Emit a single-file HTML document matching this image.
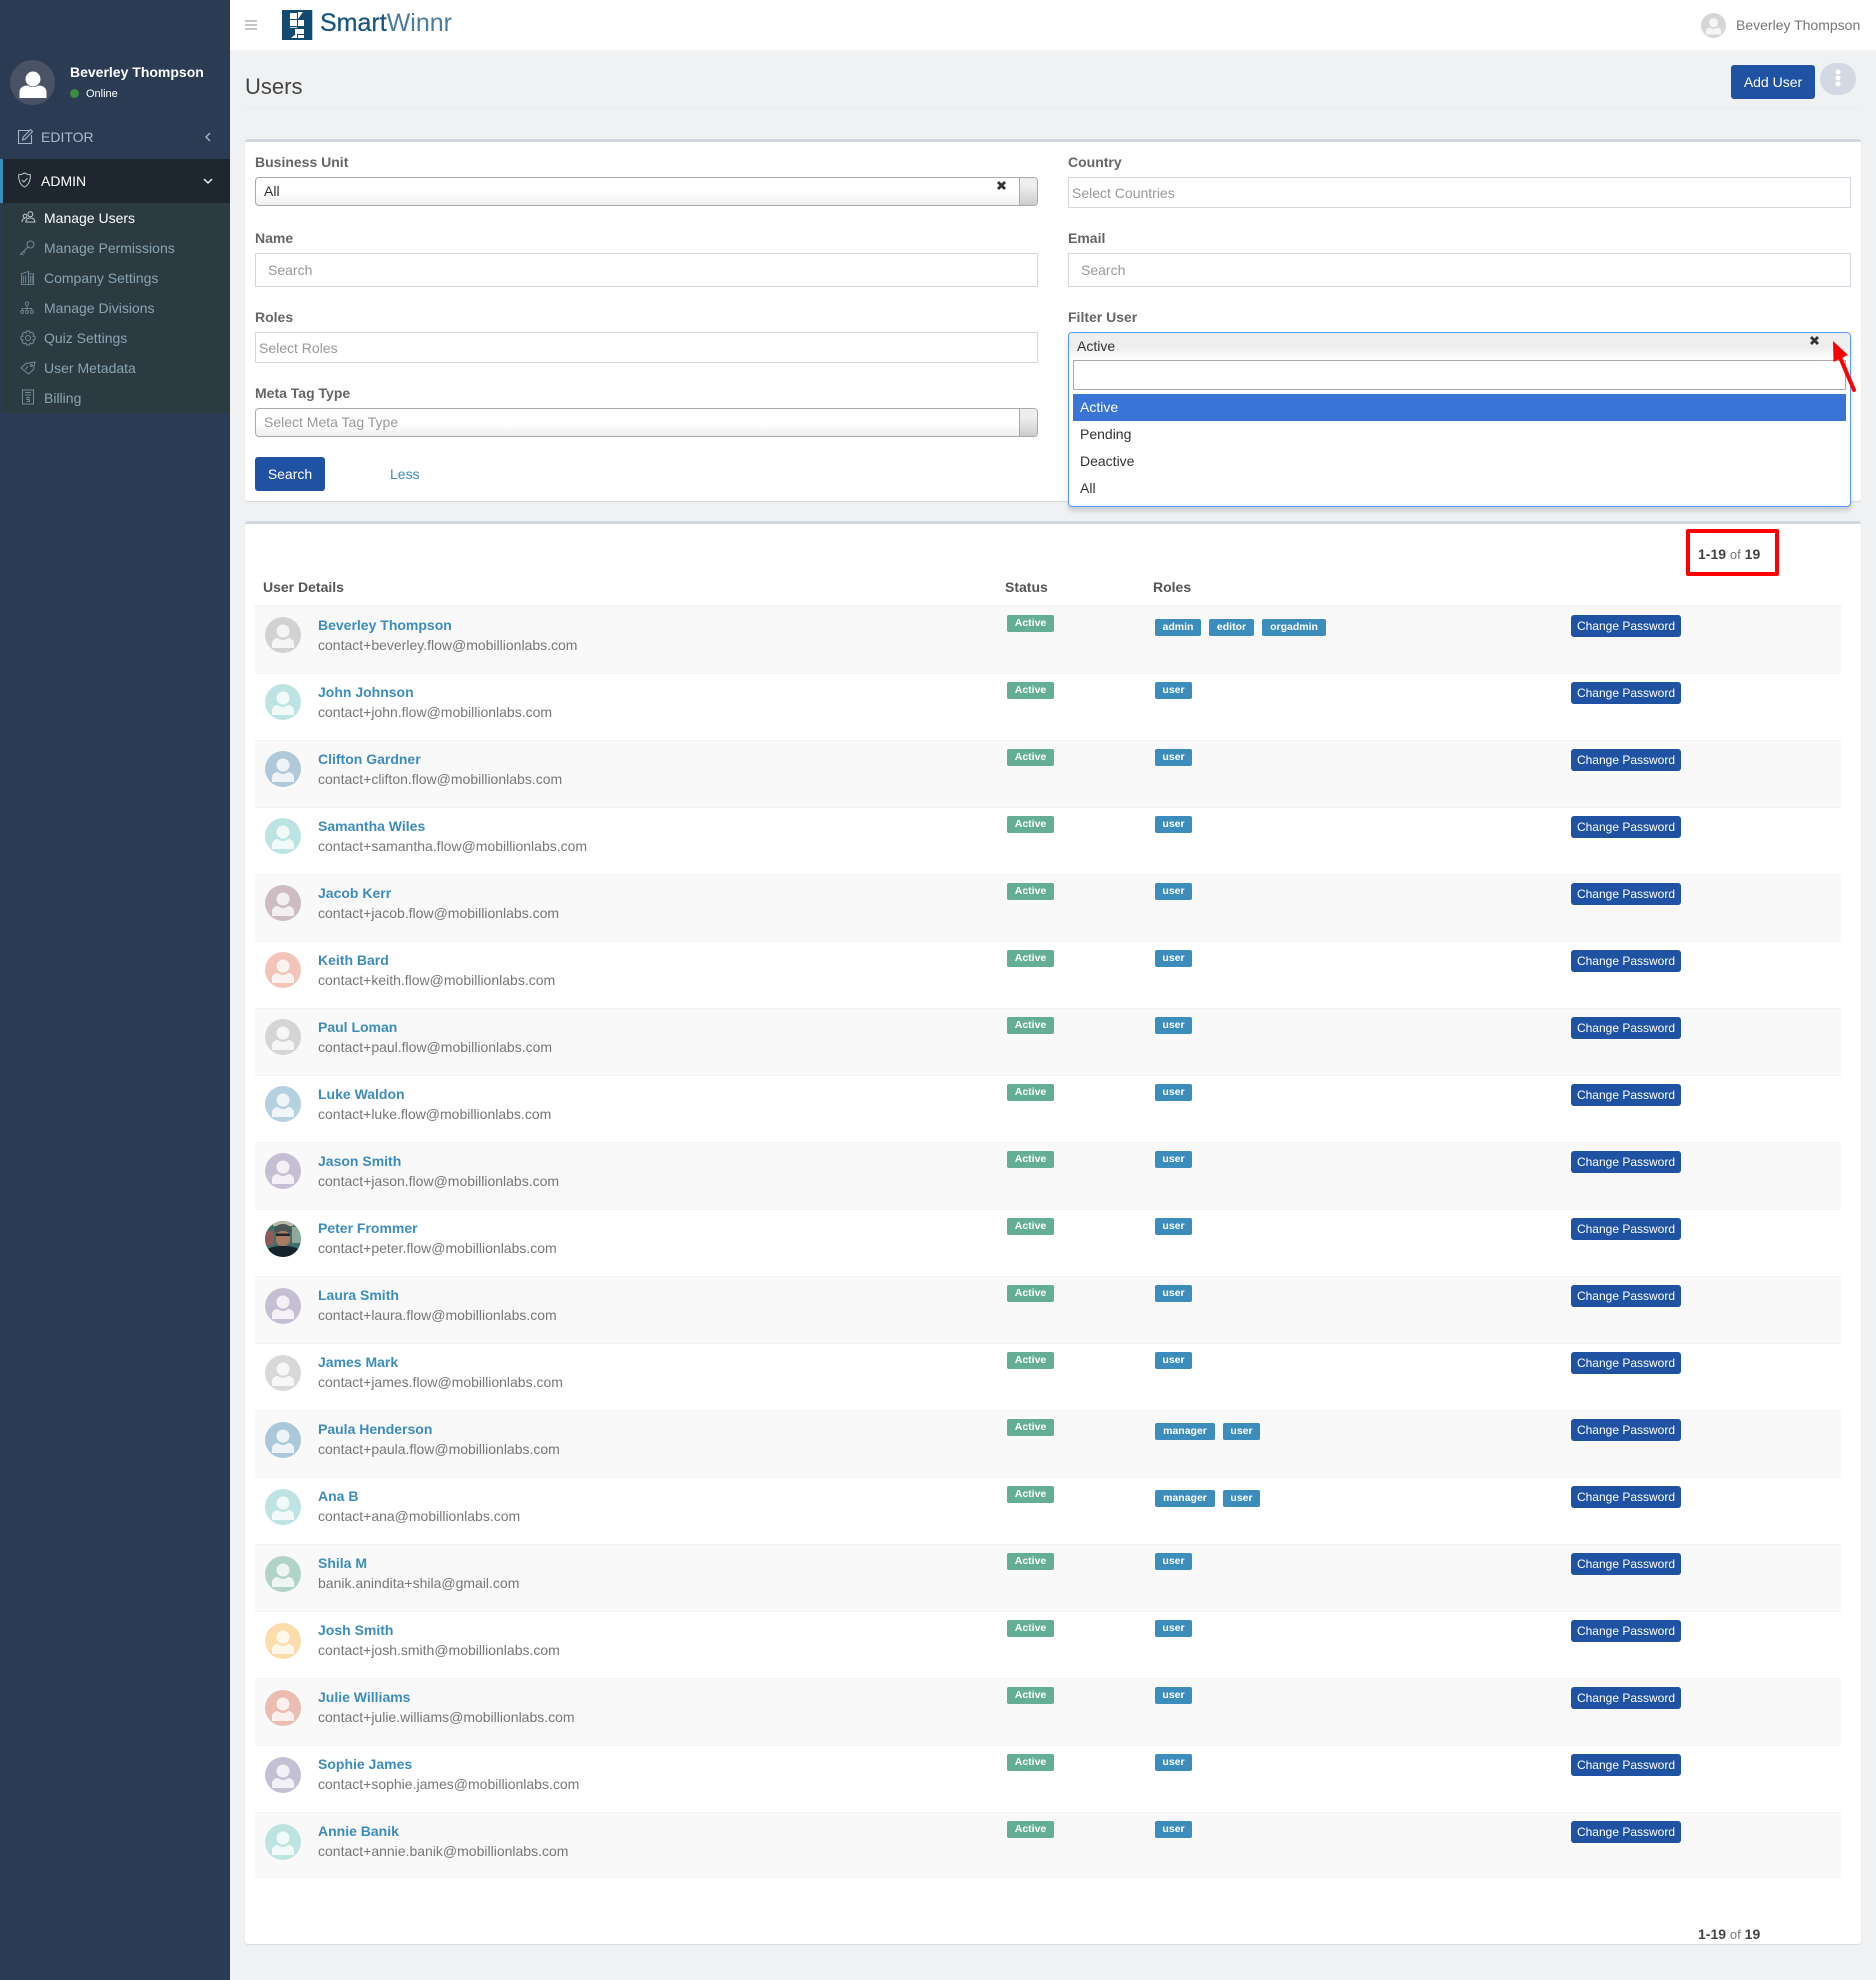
<!DOCTYPE html>
<html><head><meta charset="utf-8"><title>Users</title>
<style>
*{box-sizing:border-box}
html,body{margin:0;padding:0}
body{width:1876px;height:1980px;position:relative;overflow:hidden;background:#eff1f3;font:14px/20px "Liberation Sans",sans-serif;color:#333}
.x{position:absolute;white-space:nowrap}
#side{position:absolute;left:0;top:0;width:230px;height:1980px;background:#2c3b54}
#head{position:absolute;left:230px;top:0;width:1646px;height:50px;background:#fff}
.m{position:absolute;left:44px;color:#8aa5b3;white-space:nowrap;line-height:20px}
.ic{position:absolute;left:19px;width:16px;height:16px;fill:none;stroke:#728c99;stroke-width:1}
.panel{position:absolute;left:245px;width:1616px;background:#fff;border-top:3px solid #d2d6de;border-radius:3px;box-shadow:0 1px 1px rgba(0,0,0,.1)}
.lb{position:absolute;font-weight:bold;color:#666;white-space:nowrap;line-height:20px}
.inp{position:absolute;background:#fff;border:1px solid #d2d6de;color:#999;white-space:nowrap}
.sel{position:absolute;left:255px;width:783px;height:29px;border:1px solid #aaa;border-radius:4px;background:linear-gradient(#fff 55%,#eee);line-height:26px;padding-left:8px;overflow:hidden}
.sel i{position:absolute;right:0;top:0;bottom:0;width:18px;border-left:1px solid #aaa;background:linear-gradient(#eee 30%,#ccc)}
.btn{position:absolute;background:#2052a4;color:#fff;border-radius:3px;text-align:center}
.opt{position:absolute;left:1080px;color:#333;line-height:20px}
.r{position:absolute;left:255px;width:1586px;height:67px;border-top:1px solid #f2f2f2}
.g{background:#f9f9f9}
.a{position:absolute;left:10px;top:10px;width:36px;height:36px}
.n{position:absolute;left:63px;top:8px;font-weight:bold;color:#3c8dbc;line-height:20px;white-space:nowrap}
.e{position:absolute;left:63px;top:28px;color:#777;line-height:20px;white-space:nowrap}
.s,.b{position:absolute;top:8px;height:17px;line-height:16px;font-size:10.5px;font-weight:bold;color:#fff;text-align:center;border-radius:2px}
.s{left:752px;width:47px;background:#63ae95}
.b{left:900px;width:37px;background:#3c8dbc}
.c{position:absolute;left:1316px;top:8px;width:110px;height:22px;line-height:22px;font-size:12px;color:#fff;text-align:center;background:#2052a4;border-radius:3px}
.pg{position:absolute;left:1698px;color:#444;white-space:nowrap;line-height:20px}
.pg b{color:#444}.pg span{color:#777;font-size:13px}
</style></head><body>
<svg width="0" height="0" style="position:absolute"><defs>
<g id="p"><circle cx="18" cy="18" r="18" fill="currentColor"/><circle cx="18" cy="14" r="6.5" fill="#fff" fill-opacity=".78"/><path d="M7 31v-4.5c0-3.500 3-5.500 6-5.500 1.500 1.300 3 2 5 2s3.500-.7 5-2c3 0 6 2 6 5.500V31z" fill="#fff" fill-opacity=".78"/></g>
</defs></svg>

<div id="side">
<svg class="x" style="left:10px;top:60px" width="45" height="45" viewBox="0 0 45 45"><circle cx="22.500" cy="22.500" r="22.500" fill="#4a5265"/><circle cx="23" cy="19" r="7.500" fill="#fff"/><path d="M9.500 38v-6c0-4 3.500-6.500 8-6.500 1.500 1 3.500 1.500 5.500 1.500s4-.5 5.500-1.500c4.500 0 8 2.500 8 6.500v6z" fill="#fff"/></svg>
<div class="x" style="left:70px;top:62px;font-weight:bold;color:#fff">Beverley Thompson</div>
<div class="x" style="left:70px;top:88.500px;width:9px;height:9px;border-radius:50%;background:#3d8b40"></div>
<div class="x" style="left:86px;top:83.500px;font-size:11px;color:#fff">Online</div>

<svg class="x" style="left:17px;top:128px;fill:none;stroke:#a3b4c4;stroke-width:1.100" width="17" height="17" viewBox="0 0 17 17"><path d="M12 2.500H1.500v13h13V7"/><path d="M5.500 12l.8-3L13.500 1.500l2 2L8.300 11z"/></svg>
<div class="x" style="left:41px;top:127px;color:#a9bccb">EDITOR</div>
<svg class="x" style="left:205px;top:132px;fill:none;stroke:#a9bccb;stroke-width:1.300" width="6" height="10"><path d="M5 1L1 5l4 4"/></svg>

<div class="x" style="left:0;top:159px;width:230px;height:44px;background:#1e2630;border-left:3px solid #3c8dbc"></div>
<svg class="x" style="left:17px;top:172px;fill:none;stroke:#d5dde2;stroke-width:1" width="15" height="16" viewBox="0 0 16 18"><path d="M8 1C6 2.500 3.500 3 1.500 3c-.3 6 1 11 6.500 14 5.500-3 6.800-8 6.500-14C12.500 3 10 2.500 8 1z"/><path d="M5 9l2.300 2.300L11.300 7"/></svg>
<div class="x" style="left:41px;top:171px;color:#fff">ADMIN</div>
<svg class="x" style="left:203px;top:178px;fill:none;stroke:#fff;stroke-width:1.300" width="10" height="6"><path d="M1 1l4 4 4-4"/></svg>

<div class="x" style="left:2px;top:203px;width:228px;height:210px;background:#2c3a42"></div>
<svg class="ic" style="left:21px;top:211px;stroke:#d0d8dc;width:15px;height:12px" viewBox="0 0 15 13"><circle cx="9.500" cy="3.500" r="2.700"/><path d="M4.500 12c.2-3 2.200-4.500 5-4.500s4.800 1.500 5 4.500z"/><circle cx="3.700" cy="5.500" r="2"/><path d="M.5 12c0-2.500 1-3.700 3-3.700"/></svg>
<div class="m" style="top:208px;color:#fff">Manage Users</div>
<svg class="ic" style="top:240px" viewBox="0 0 16 16"><circle cx="11.500" cy="4.500" r="3.500"/><path d="M9 7L1 15M2.500 13.500l2 1.500M4.500 11.500l1.500 1.500"/></svg>
<div class="m" style="top:238px">Manage Permissions</div>
<svg class="ic" style="top:270px;left:20px;width:15px" viewBox="0 0 16 16"><path d="M1.500 15V3.500L9 1v14M9 3.500h5.500V15H1M3.500 5.500v8M6 5v8.500M11 5.500v8M13 5.500v8"/></svg>
<div class="m" style="top:268px">Company Settings</div>
<svg class="ic" style="top:301px;left:20px;width:14px;height:14px" viewBox="0 0 16 16"><circle cx="8" cy="3" r="2"/><circle cx="2.500" cy="12.500" r="1.700"/><circle cx="8" cy="12.500" r="1.700"/><circle cx="13.500" cy="12.500" r="1.700"/><path d="M8 5v6M2.500 11V8.500h11V11"/></svg>
<div class="m" style="top:298px">Manage Divisions</div>
<svg class="ic" style="top:330px;left:20px" viewBox="0 0 16 16"><circle cx="8" cy="8" r="2.500"/><path d="M6.500 1h3l.5 2 1.800-.9 2.100 2.100-.9 1.800 2 .5v3l-2 .5.900 1.800-2.100 2.100-1.800-.9-.5 2h-3l-.5-2-1.800.9-2.100-2.100.9-1.800-2-.5v-3l2-.5-.9-1.800 2.100-2.100 1.800.9z"/></svg>
<div class="m" style="top:328px">Quiz Settings</div>
<svg class="ic" style="top:361px;left:20px;height:14px" viewBox="0 0 16 14"><path d="M1 7l5-4.500L15 1l-1.500 7.500-5 4.500z"/><circle cx="11.500" cy="4.500" r="1"/><path d="M8 5L5 9"/></svg>
<div class="m" style="top:358px">User Metadata</div>
<svg class="ic" style="top:389px;left:20px" viewBox="0 0 16 16"><path d="M2.500 1h11v14h-11zM5 3.500h6M5 6h6"/><path d="M10 8.500H7v2h2.500v2H6.500"/></svg>
<div class="m" style="top:388px">Billing</div>
</div>

<div id="head"></div>
<svg class="x" style="left:245px;top:20px" width="12" height="10"><path d="M0 0h12v2H0zM0 4h12v2H0zM0 8h12v2H0z" fill="#c6c6c6"/></svg>
<svg class="x" style="left:282px;top:10px" width="31" height="30" viewBox="0 0 31 30"><rect width="30" height="30" fill="#124a70"/><rect x="30" width="1" height="30" fill="#b9d0de"/><path d="M8 3h7v6H8zM8 10h7v6H8zM16 10h6v6h-6z" fill="#fff"/><path d="M16 2h5l-5 7z" fill="#fff"/><path d="M13 19h9v5h-9zM16 25h6v3h-6zM9 28l6-5v5z" fill="#fff"/><path d="M8 17h7v1H8z" fill="#cfdde6"/></svg>
<div class="x" style="left:320px;top:8px;font-size:25px;line-height:30px;color:#19567f"><span style="-webkit-text-stroke:.3px #19567f">Smart</span><span style="color:#4a7c9d">Winnr</span></div>
<svg class="x" style="left:1701px;top:13px" width="25" height="25" viewBox="0 0 36 36" color="#d6d6d6"><use href="#p"/></svg>
<div class="x" style="left:1736px;top:15px;color:#777">Beverley Thompson</div>

<div class="x" style="left:245px;top:74px;font-size:22px;line-height:26px;color:#444">Users</div>
<div class="x" style="left:245px;top:108px;width:1615px;height:1px;background:#e9ebee"></div>
<div class="btn" style="left:1731px;top:65px;width:84px;height:34px;line-height:34px">Add User</div>
<div class="x" style="left:1820px;top:63px;width:36px;height:32px;border-radius:16px;background:#d2d9e2"></div>
<svg class="x" style="left:1835px;top:68px" width="6" height="20"><circle cx="3" cy="4" r="2.500" fill="#fff"/><circle cx="3" cy="10" r="2.500" fill="#fff"/><circle cx="3" cy="16" r="2.500" fill="#fff"/></svg>

<div class="panel" style="top:139px;height:362px"></div>
<div class="lb" style="left:255px;top:152px">Business Unit</div>
<div class="sel" style="top:177px">All<i></i></div>
<svg class="x" style="left:996px;top:180px" width="11" height="11"><path d="M2 2l7 7M9 2l-7 7" stroke="#333" stroke-width="2.800"/></svg>
<div class="lb" style="left:255px;top:228px">Name</div>
<div class="inp" style="left:255px;top:253px;width:783px;height:34px;line-height:32px;padding-left:12px">Search</div>
<div class="lb" style="left:255px;top:307px">Roles</div>
<div class="inp" style="left:255px;top:332px;width:783px;height:31px;line-height:30px;padding-left:3px">Select Roles</div>
<div class="lb" style="left:255px;top:383px">Meta Tag Type</div>
<div class="sel" style="top:408px;color:#999">Select Meta Tag Type<i></i></div>
<div class="btn" style="left:255px;top:457px;width:70px;height:34px;line-height:34px">Search</div>
<div class="x" style="left:390px;top:464px;color:#3c8dbc">Less</div>

<div class="lb" style="left:1068px;top:152px">Country</div>
<div class="inp" style="left:1068px;top:177px;width:783px;height:31px;line-height:30px;padding-left:3px">Select Countries</div>
<div class="lb" style="left:1068px;top:228px">Email</div>
<div class="inp" style="left:1068px;top:253px;width:783px;height:34px;line-height:32px;padding-left:12px">Search</div>
<div class="lb" style="left:1068px;top:307px">Filter User</div>

<div class="x" style="left:1068px;top:332px;width:783px;height:175px;background:#fff;border:1px solid #5897fb;border-radius:4px;box-shadow:0 4px 5px rgba(0,0,0,.15)"></div>
<div class="x" style="left:1069px;top:333px;width:781px;height:27px;background:linear-gradient(#eee 50%,#fff);border-radius:3px 3px 0 0"></div>
<div class="x" style="left:1077px;top:336px;color:#333">Active</div>
<svg class="x" style="left:1809px;top:335px" width="11" height="11"><path d="M2 2l7 7M9 2l-7 7" stroke="#333" stroke-width="2.800"/></svg>
<div class="x" style="left:1073px;top:360px;width:773px;height:30px;background:#fff;border:1px solid #aaa"></div>
<div class="x" style="left:1073px;top:394px;width:773px;height:27px;background:#3875d7"></div>
<div class="opt" style="top:397px;color:#fff">Active</div>
<div class="opt" style="top:424px">Pending</div>
<div class="opt" style="top:451px">Deactive</div>
<div class="opt" style="top:478px">All</div>
<svg class="x" style="left:1825px;top:335px" width="40" height="62"><path d="M14 20L29 55" stroke="#f00" stroke-width="4" stroke-linecap="round" fill="none"/><path d="M8 6L23 20 8.500 27z" fill="#f00"/></svg>

<div class="panel" style="top:521px;height:1423px"></div>
<div class="x" style="left:1686px;top:529px;width:93px;height:47px;border:4px solid #f00;border-radius:2px"></div>
<div class="pg" style="top:544px"><b>1-19</b> <span>of</span> <b>19</b></div>
<div class="lb" style="left:263px;top:577px;color:#555">User Details</div>
<div class="lb" style="left:1005px;top:577px;color:#555">Status</div>
<div class="lb" style="left:1153px;top:577px;color:#555">Roles</div>

<div class="r g" style="top:605px;height:68px;border-top:2px solid #f2f2f2"><svg class="a" color="#d2d2d2"><use href="#p"/></svg><div class="n">Beverley Thompson</div><div class="e">contact+beverley.flow@mobillionlabs.com</div><span class="s">Active</span><span class="b" style="top:12px;width:46px">admin</span><span class="b" style="top:12px;left:954px;width:45px">editor</span><span class="b" style="top:12px;left:1007px;width:64px">orgadmin</span><span class="c">Change Password</span></div>
<div class="r" style="top:673px"><svg class="a" color="#bde4e2"><use href="#p"/></svg><div class="n">John Johnson</div><div class="e">contact+john.flow@mobillionlabs.com</div><span class="s">Active</span><span class="b">user</span><span class="c">Change Password</span></div>
<div class="r g" style="top:740px"><svg class="a" color="#b0c8d8"><use href="#p"/></svg><div class="n">Clifton Gardner</div><div class="e">contact+clifton.flow@mobillionlabs.com</div><span class="s">Active</span><span class="b">user</span><span class="c">Change Password</span></div>
<div class="r" style="top:807px"><svg class="a" color="#bde4e2"><use href="#p"/></svg><div class="n">Samantha Wiles</div><div class="e">contact+samantha.flow@mobillionlabs.com</div><span class="s">Active</span><span class="b">user</span><span class="c">Change Password</span></div>
<div class="r g" style="top:874px"><svg class="a" color="#cdbcc1"><use href="#p"/></svg><div class="n">Jacob Kerr</div><div class="e">contact+jacob.flow@mobillionlabs.com</div><span class="s">Active</span><span class="b">user</span><span class="c">Change Password</span></div>
<div class="r" style="top:941px"><svg class="a" color="#f2c4ba"><use href="#p"/></svg><div class="n">Keith Bard</div><div class="e">contact+keith.flow@mobillionlabs.com</div><span class="s">Active</span><span class="b">user</span><span class="c">Change Password</span></div>
<div class="r g" style="top:1008px"><svg class="a" color="#d5d5d5"><use href="#p"/></svg><div class="n">Paul Loman</div><div class="e">contact+paul.flow@mobillionlabs.com</div><span class="s">Active</span><span class="b">user</span><span class="c">Change Password</span></div>
<div class="r" style="top:1075px"><svg class="a" color="#b5d0de"><use href="#p"/></svg><div class="n">Luke Waldon</div><div class="e">contact+luke.flow@mobillionlabs.com</div><span class="s">Active</span><span class="b">user</span><span class="c">Change Password</span></div>
<div class="r g" style="top:1142px"><svg class="a" color="#c6bfd3"><use href="#p"/></svg><div class="n">Jason Smith</div><div class="e">contact+jason.flow@mobillionlabs.com</div><span class="s">Active</span><span class="b">user</span><span class="c">Change Password</span></div>
<div class="r" style="top:1209px;height:68px"><svg class="a" style="top:11px" viewBox="0 0 36 36"><defs><clipPath id="cp"><circle cx="18" cy="18" r="18"/></clipPath></defs><g clip-path="url(#cp)"><rect width="36" height="36" fill="#3f6f6a"/><rect x="0" y="10" width="9" height="14" fill="#8f5a58"/><rect x="27" y="6" width="9" height="16" fill="#8fa89a"/><rect x="8" y="0" width="20" height="5" fill="#b9b9a5"/><path d="M9 11c0-5 4-8 9-8s9 3 9 8z" fill="#4a5655"/><rect x="11" y="10" width="14" height="15" rx="6" fill="#a87a5f"/><rect x="11" y="12.500" width="14" height="2.500" fill="#22262a"/><path d="M0 36V30c5-4 10-5 18-5s13 1 18 5v6z" fill="#16222c"/></g></svg><div class="n">Peter Frommer</div><div class="e">contact+peter.flow@mobillionlabs.com</div><span class="s">Active</span><span class="b">user</span><span class="c">Change Password</span></div>
<div class="r g" style="top:1276px"><svg class="a" color="#c6bfd3" style="top:11px"><use href="#p"/></svg><div class="n">Laura Smith</div><div class="e">contact+laura.flow@mobillionlabs.com</div><span class="s">Active</span><span class="b">user</span><span class="c">Change Password</span></div>
<div class="r" style="top:1343px"><svg class="a" color="#d8d8d8" style="top:11px"><use href="#p"/></svg><div class="n">James Mark</div><div class="e">contact+james.flow@mobillionlabs.com</div><span class="s">Active</span><span class="b">user</span><span class="c">Change Password</span></div>
<div class="r g" style="top:1410px"><svg class="a" color="#abc8da" style="top:11px"><use href="#p"/></svg><div class="n">Paula Henderson</div><div class="e">contact+paula.flow@mobillionlabs.com</div><span class="s">Active</span><span class="b" style="top:12px;width:60px">manager</span><span class="b" style="top:12px;left:968px">user</span><span class="c">Change Password</span></div>
<div class="r" style="top:1477px"><svg class="a" color="#bde4e2" style="top:11px"><use href="#p"/></svg><div class="n">Ana B</div><div class="e">contact+ana@mobillionlabs.com</div><span class="s">Active</span><span class="b" style="top:12px;width:60px">manager</span><span class="b" style="top:12px;left:968px">user</span><span class="c">Change Password</span></div>
<div class="r g" style="top:1544px"><svg class="a" color="#b2d4c6" style="top:11px"><use href="#p"/></svg><div class="n">Shila M</div><div class="e">banik.anindita+shila@gmail.com</div><span class="s">Active</span><span class="b">user</span><span class="c">Change Password</span></div>
<div class="r" style="top:1611px"><svg class="a" color="#fbdcaa" style="top:11px"><use href="#p"/></svg><div class="n">Josh Smith</div><div class="e">contact+josh.smith@mobillionlabs.com</div><span class="s">Active</span><span class="b">user</span><span class="c">Change Password</span></div>
<div class="r g" style="top:1678px"><svg class="a" color="#ecbcb0" style="top:11px"><use href="#p"/></svg><div class="n">Julie Williams</div><div class="e">contact+julie.williams@mobillionlabs.com</div><span class="s">Active</span><span class="b">user</span><span class="c">Change Password</span></div>
<div class="r" style="top:1745px"><svg class="a" color="#c5bfd3" style="top:11px"><use href="#p"/></svg><div class="n">Sophie James</div><div class="e">contact+sophie.james@mobillionlabs.com</div><span class="s">Active</span><span class="b">user</span><span class="c">Change Password</span></div>
<div class="r g" style="top:1812px"><svg class="a" color="#bde4e2" style="top:11px"><use href="#p"/></svg><div class="n">Annie Banik</div><div class="e">contact+annie.banik@mobillionlabs.com</div><span class="s">Active</span><span class="b">user</span><span class="c">Change Password</span></div>
<div class="pg" style="top:1924px"><b>1-19</b> <span>of</span> <b>19</b></div>
</body></html>
